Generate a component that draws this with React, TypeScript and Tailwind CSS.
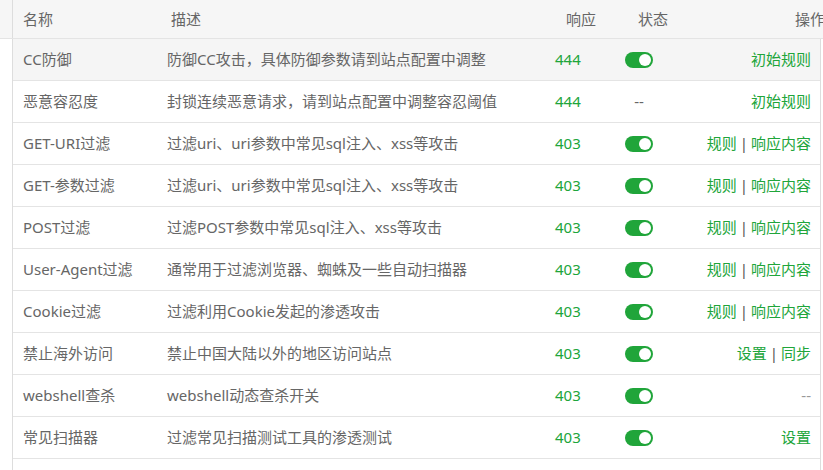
import React from "react";

interface Rule {
  name: string;
  desc: string;
  code: string;
  on: boolean | null;
  ops: string[] | null;
}

const rules: Rule[] = [
  { name: "CC防御", desc: "防御CC攻击，具体防御参数请到站点配置中调整", code: "444", on: true, ops: ["初始规则"] },
  { name: "恶意容忍度", desc: "封锁连续恶意请求，请到站点配置中调整容忍阈值", code: "444", on: null, ops: ["初始规则"] },
  { name: "GET-URI过滤", desc: "过滤uri、uri参数中常见sql注入、xss等攻击", code: "403", on: true, ops: ["规则", "响应内容"] },
  { name: "GET-参数过滤", desc: "过滤uri、uri参数中常见sql注入、xss等攻击", code: "403", on: true, ops: ["规则", "响应内容"] },
  { name: "POST过滤", desc: "过滤POST参数中常见sql注入、xss等攻击", code: "403", on: true, ops: ["规则", "响应内容"] },
  { name: "User-Agent过滤", desc: "通常用于过滤浏览器、蜘蛛及一些自动扫描器", code: "403", on: true, ops: ["规则", "响应内容"] },
  { name: "Cookie过滤", desc: "过滤利用Cookie发起的渗透攻击", code: "403", on: true, ops: ["规则", "响应内容"] },
  { name: "禁止海外访问", desc: "禁止中国大陆以外的地区访问站点", code: "403", on: true, ops: ["设置", "同步"] },
  { name: "webshell查杀", desc: "webshell动态查杀开关", code: "403", on: true, ops: null },
  { name: "常见扫描器", desc: "过滤常见扫描测试工具的渗透测试", code: "403", on: true, ops: ["设置"] },
];

function Toggle() {
  return (
    <div className="w-[28px] h-[16px] rounded-full bg-[#20a53a] flex items-center justify-end pr-[2px]">
      <div className="w-[12px] h-[12px] rounded-full bg-white" />
    </div>
  );
}

function Ops({ ops }: { ops: string[] | null }) {
  if (!ops) return <span className="text-[#999]">--</span>;
  return (
    <span className="text-[#20a53a]">
      {ops.map((o, i) => (
        <React.Fragment key={o}>
          {i > 0 && <span className="text-[#555] mx-[3px]">|</span>}
          <a href="#">{o}</a>
        </React.Fragment>
      ))}
    </span>
  );
}

export default function App() {
  return (
    <div
      className="w-[823px] h-[470px] overflow-hidden bg-white text-[15px] text-[#666]"
      style={{ fontFamily: '"Noto Sans", "Noto Sans CJK SC", sans-serif' }}
    >
      {/* header */}
      <div className="h-[39px] bg-[#f6f6f6] border-b border-[#e4e4e4]">
        <div className="ml-[12px] h-full w-[823px] border-l border-[#ddd] flex items-center whitespace-nowrap">
          <div className="w-[158px] pl-[10px]">名称</div>
          <div className="w-[395px]">描述</div>
          <div className="w-[72px]">响应</div>
          <div className="w-[90px]">状态</div>
          <div className="flex-1 text-right pr-[10px]">操作</div>
        </div>
      </div>

      {/* body */}
      <div className="ml-[12px] w-[809px] border-l border-r border-[#ddd]">
        {rules.map((r, i) => (
          <div
            key={r.name}
            className={`h-[42px] flex items-center border-b border-[#e4e4e4] ${i === 0 ? "bg-[#f5f5f5]" : ""}`}
          >
            <div className="w-[154px] pl-[10px] whitespace-nowrap">{r.name}</div>
            <div className="w-[388px] whitespace-nowrap">{r.desc}</div>
            <div className="w-[70px] text-[#20a53a]">{r.code}</div>
            <div className="w-[80px] flex">
              {r.on ? <Toggle /> : <span className="w-[28px] text-center">--</span>}
            </div>
            <div className="flex-1 text-right pr-[9px] whitespace-nowrap">
              <Ops ops={r.ops} />
            </div>
          </div>
        ))}
        <div className="h-[42px]" />
      </div>
    </div>
  );
}
